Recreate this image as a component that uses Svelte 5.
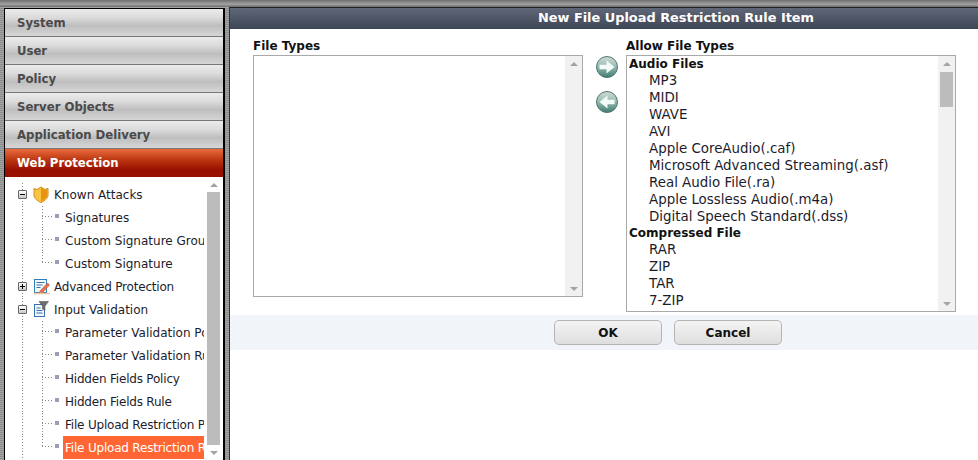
<script>
	const menu = ['System', 'User', 'Policy', 'Server Objects', 'Application Delivery'];
	const tree = [
		{ label: 'Known Attacks', root: true, open: true, icon: 'shield' },
		{ label: 'Signatures' },
		{ label: 'Custom Signature Group' },
		{ label: 'Custom Signature', last: true },
		{ label: 'Advanced Protection', root: true, open: false, icon: 'note', tight: true },
		{ label: 'Input Validation', root: true, open: true, icon: 'filter' },
		{ label: 'Parameter Validation Policy' },
		{ label: 'Parameter Validation Rule' },
		{ label: 'Hidden Fields Policy', tight: true },
		{ label: 'Hidden Fields Rule', tight: true },
		{ label: 'File Upload Restriction Policy', tight: true },
		{ label: 'File Upload Restriction Rule', last: true, selected: true, tight: true }
	];
	const fileGroups = [
		{
			name: 'Audio Files',
			items: [
				'MP3',
				'MIDI',
				'WAVE',
				'AVI',
				'Apple CoreAudio(.caf)',
				'Microsoft Advanced Streaming(.asf)',
				'Real Audio File(.ra)',
				'Apple Lossless Audio(.m4a)',
				'Digital Speech Standard(.dss)'
			]
		},
		{ name: 'Compressed File', items: ['RAR', 'ZIP', 'TAR', '7-ZIP', 'GZIP'] }
	];
</script>

{#snippet scrollbar(thumb)}
	<div class="scrollbar">
		<span class="arrow up"></span>
		{#if thumb}<span class="thumb"></span>{/if}
		<span class="grow"></span>
		<span class="arrow down"></span>
	</div>
{/snippet}

{#snippet roundArrow(dir)}
	<svg class="round" width="24" height="24" viewBox="0 0 24 24">
		<defs>
			<linearGradient id="ball-{dir}" x1="0" y1="0" x2="0" y2="1">
				<stop offset="0" stop-color="#cfdcd8" />
				<stop offset="0.45" stop-color="#9dbdb6" />
				<stop offset="1" stop-color="#3f7d72" />
			</linearGradient>
		</defs>
		<circle cx="12" cy="12" r="10.500" fill="url(#ball-{dir})" stroke="#4f7770" />
		<path
			d={dir === 'right'
				? 'M4.500 9.800h7V5.500L19.500 12l-8 6.500v-4.300h-7z'
				: 'M19.500 9.800h-7V5.500L4.500 12l8 6.500v-4.300h7z'}
			fill="#f2fbf6"
		/>
	</svg>
{/snippet}

{#snippet treeIcon(kind)}
	{#if kind === 'shield'}
		<svg width="16" height="17" viewBox="0 0 16 17">
			<path d="M1 2.500 4 3.500 8 1l4 2.500 3-1V9c0 3.500-3.500 6-7 7.500C4.500 15 1 12.500 1 9z" fill="#f8c441" stroke="#d08c14" />
			<path d="M8 2v13.500C11 14 14 12 14 9V3.500l-2 .8z" fill="#e8920f" />
		</svg>
	{:else if kind === 'note'}
		<svg width="18" height="17" viewBox="0 0 18 17">
			<rect x="1.500" y="1.500" width="12" height="13" fill="#f4f8fc" stroke="#2f7fb8" />
			<path d="M3.500 4.500h8M3.500 7h6M3.500 9.500h4" stroke="#3c6fa8" />
			<path d="M7 13 14.500 5l2 2-7.500 8-3 .8z" fill="#e8734a" stroke="#b9532c" stroke-width=".6" />
			<path d="M1 15.500h16" stroke="#f0c6a8" stroke-width="1.500" />
		</svg>
	{:else}
		<svg width="16" height="17" viewBox="0 0 16 17">
			<rect x="1.500" y="3.500" width="10" height="12" fill="#f2f6fb" stroke="#3a72ac" />
			<path d="M3.500 7h4M3.500 9.500h6M3.500 12h6" stroke="#3a72ac" />
			<path d="M6 .5h9.500L12 5v4.500L9.500 8V5z" fill="#6d6d6d" stroke="#444" stroke-width=".5" />
		</svg>
	{/if}
{/snippet}

<div class="page">
	<div class="topstrip"></div>
	<div class="columns">
		<aside class="sidebar">
			{#each menu as item}
				<div class="menu-item">{item}</div>
			{/each}
			<div class="menu-item active">Web Protection</div>
			<div class="tree-wrap">
				<div class="tree">
					{#each tree as row}
						<div class="row">
							<div class="spine">
								{#if row.root}
									<span class="expander">
										<span class="dash"></span>
										{#if !row.open}<span class="dash vert"></span>{/if}
									</span>
								{/if}
							</div>
							{#if row.root}
								<div class="icon">{@render treeIcon(row.icon)}</div>
								<span class="label root-label" class:tight={row.tight}>{row.label}</span>
							{:else}
								<div class="branch" class:last={row.last}></div>
								<span class="bullet"></span>
								<span class="label" class:selected={row.selected} class:tight={row.tight}>{row.label}</span>
							{/if}
						</div>
					{/each}
				</div>
				<div class="tree-scroll">{@render scrollbar(false)}</div>
			</div>
		</aside>

		<main class="main">
			<header class="title">New File Upload Restriction Rule Item</header>
			<div class="form">
				<section class="picker">
					<h3>File Types</h3>
					<div class="listbox short">
						<div class="options"></div>
						{@render scrollbar(false)}
					</div>
				</section>
				<div class="movers">
					{@render roundArrow('right')}
					{@render roundArrow('left')}
				</div>
				<section class="picker">
					<h3>Allow File Types</h3>
					<div class="listbox">
						<div class="options">
							{#each fileGroups as group}
								<div class="group">{group.name}</div>
								{#each group.items as item}
									<div class="option">{item}</div>
								{/each}
							{/each}
						</div>
						{@render scrollbar(true)}
					</div>
				</section>
			</div>
			<footer class="actions">
				<button>OK</button>
				<button>Cancel</button>
			</footer>
		</main>
	</div>
</div>

<style>
	:global(body) {
		margin: 0;
	}
	.page {
		width: 978px;
		height: 460px;
		overflow: hidden;
		display: flex;
		flex-direction: column;
		font-family: 'DejaVu Sans', Verdana, sans-serif;
		font-size: 12px;
		color: #1c1c2c;
		background: repeating-linear-gradient(#8c8c8c 0 1px, #a4a4a4 1px 2px);
	}
	.topstrip {
		height: 7px;
		flex: none;
		background: linear-gradient(#6e6e6e, #a2a2a2 60%, #6b6b6b);
	}
	.columns {
		flex: 1;
		display: flex;
		min-height: 0;
	}
	.sidebar {
		width: 218px;
		margin: 1px 0 0 4px;
		border: 1px solid #000;
		border-width: 1px 2px 0 1px;
		background: #fff;
		display: flex;
		flex-direction: column;
		min-height: 0;
		flex: none;
	}
	.menu-item {
		height: 27px;
		flex: none;
		border-bottom: 1px solid #777;
		padding-left: 12px;
		line-height: 29px;
		font-size: 11.700px;
		font-weight: bold;
		color: #4a4a4a;
		background: linear-gradient(#ebebeb 0, #dcdcdc 30%, #bebebe 62%, #d6d6d6 100%);
	}
	.menu-item.active {
		height: 28px;
		border: 0;
		line-height: 28px;
		color: #fff;
		background: linear-gradient(#ea6a3c 0, #b52f0c 45%, #981000 75%, #981000 100%);
	}
	.tree-wrap {
		flex: 1;
		min-height: 0;
		display: flex;
	}
	.tree {
		width: 199px;
		flex: none;
		overflow: hidden;
		padding-top: 6px;
		background: #fff;
	}
	.row {
		height: 23px;
		display: flex;
		align-items: center;
		white-space: nowrap;
		color: #1c1c2c;
	}
	.spine {
		width: 26px;
		height: 100%;
		flex: none;
		display: flex;
		align-items: center;
		background: repeating-linear-gradient(#888 0 1px, transparent 1px 3px) 17px 0 / 1px 100% no-repeat;
	}
	.expander {
		width: 7px;
		height: 7px;
		margin-left: 13px;
		position: relative;
		border: 1px solid #666;
		border-radius: 1px;
		background: linear-gradient(#fff, #c8c8c8);
	}
	.dash {
		position: absolute;
		left: 1px;
		right: 1px;
		top: 3px;
		height: 1px;
		background: #000;
	}
	.dash.vert {
		left: 3px;
		right: 3px;
		top: 1px;
		width: 1px;
		height: 5px;
	}
	.icon {
		width: 21px;
		margin-left: 2px;
		flex: none;
		display: flex;
		align-items: center;
	}
	.branch {
		width: 24px;
		height: 100%;
		flex: none;
		background:
			repeating-linear-gradient(#888 0 1px, transparent 1px 3px) 11px 0 / 1px 100% no-repeat,
			repeating-linear-gradient(90deg, #888 0 1px, transparent 1px 3px) 11px 10px / 11px 1px no-repeat;
	}
	.branch.last {
		background:
			repeating-linear-gradient(#888 0 1px, transparent 1px 3px) 11px 0 / 1px 11px no-repeat,
			repeating-linear-gradient(90deg, #888 0 1px, transparent 1px 3px) 11px 10px / 11px 1px no-repeat;
	}
	.bullet {
		width: 4px;
		height: 4px;
		flex: none;
		margin-right: 4px;
		background: #9a9fb8;
		transform: translateY(-2px);
	}
	.label {
		line-height: 21px;
		padding: 2px 2px 0;
	}
	.root-label {
		padding-left: 0;
	}
	.tight {
		letter-spacing: -0.200px;
	}
	.label.selected {
		flex: 1;
		color: #fff;
		background: #ff6633;
	}
	.tree-scroll {
		flex: 1;
		display: flex;
		justify-content: flex-end;
		background: #fff;
	}
	.tree-wrap :global(.scrollbar) {
		width: 100%;
		background: #fff;
	}
	.scrollbar {
		width: 17px;
		flex: none;
		display: flex;
		flex-direction: column;
		align-items: center;
		background: #f1f1f1;
	}
	.arrow {
		flex: none;
		width: 0;
		height: 0;
		border: 4px solid transparent;
		border-top-width: 0;
		border-bottom: 4px solid #a3a3a3;
		margin: 6px 0 5px;
	}
	.arrow.down {
		border-bottom-width: 0;
		border-top: 4px solid #a3a3a3;
		border-bottom-color: transparent;
	}
	.thumb {
		width: 13px;
		height: 35px;
		flex: none;
		margin-top: 1px;
		background: #bcbcbc;
	}
	.grow {
		flex: 1;
	}
	.tree-wrap :global(.scrollbar .grow) {
		width: 13px;
		background: #bcbcbc;
		margin-left: -1px;
	}
	.main {
		flex: 1;
		min-width: 0;
		margin: 0 0 0 4px;
		border-top: 1px solid #222;
		border-left: 1px solid #333;
		background: #fff;
		display: flex;
		flex-direction: column;
	}
	.title {
		height: 21px;
		flex: none;
		padding-left: 144px;
		line-height: 20px;
		text-align: center;
		font-size: 12.900px;
		font-weight: bold;
		color: #fff;
		background: linear-gradient(#5f6778, #3e4555);
	}
	.form {
		display: flex;
		height: 286px;
		flex: none;
		padding-left: 23px;
	}
	.picker {
		width: 330px;
		flex: none;
		display: flex;
		flex-direction: column;
	}
	h3 {
		margin: 0;
		height: 26px;
		line-height: 34px;
		font-size: 12px;
		font-weight: bold;
		color: #111;
	}
	.listbox {
		display: flex;
		border: 1px solid #a9a9a9;
		box-sizing: border-box;
		height: 257px;
		overflow: hidden;
	}
	.listbox.short {
		height: 242px;
	}
	.options {
		flex: 1;
		min-width: 0;
		padding: 0 2px;
		overflow: hidden;
		line-height: 17px;
	}
	.group {
		font-weight: bold;
		font-size: 12px;
		color: #111;
	}
	.option + .group {
		margin-top: -1px;
	}
	.option {
		padding: 0 0 2px 20px;
		line-height: 15px;
		font-size: 13.400px;
	}
	.movers {
		width: 43px;
		flex: none;
		display: flex;
		flex-direction: column;
		align-items: center;
		gap: 11px;
		padding: 26px 0 0 4px;
		box-sizing: border-box;
	}
	.round {
		display: block;
	}
	.actions {
		height: 35px;
		flex: none;
		display: flex;
		justify-content: center;
		gap: 12px;
		padding: 5px 0 0 128px;
		box-sizing: border-box;
		background: #f1f5fa;
	}
	button {
		width: 108px;
		height: 25px;
		border: 1px solid #b4b4b4;
		border-radius: 5px;
		background: linear-gradient(#f4f4f4, #dedede);
		font-family: inherit;
		font-size: 12px;
		font-weight: bold;
		color: #111;
		padding: 0;
	}
</style>
